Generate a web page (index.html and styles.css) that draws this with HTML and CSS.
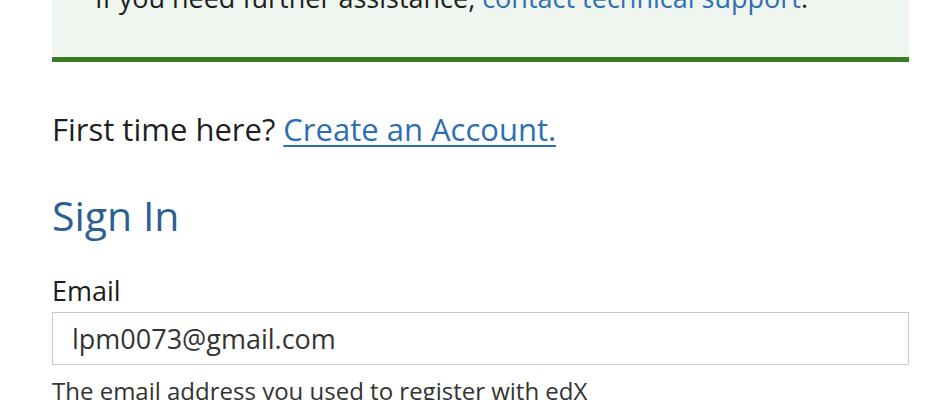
FILE: index.html
```html
<!DOCTYPE html>
<html lang="en">
<head>
<meta charset="utf-8">
<title>Sign In</title>
<link rel="stylesheet" href="styles.css">
</head>
<body>
<main class="page">
  <div class="alert">
    <p class="alert-text">If you need further assistance, <a href="#" class="alert-link">contact technical support</a>.</p>
  </div>
  <p class="first-time">First time here? <a href="#" class="create-link">Create an Account.</a></p>
  <h2 class="title">Sign In</h2>
  <form class="form">
    <label class="label" for="email">Email</label>
    <input class="input" id="email" type="email" value="lpm0073@gmail.com">
    <p class="help">The email address you used to register with edX</p>
  </form>
</main>
</body>
</html>
```
FILE: styles.css
```css
html, body {
  margin: 0;
  padding: 0;
  background: #ffffff;
}
body {
  font-family: "Open Sans", "DejaVu Sans", sans-serif;
  color: #1f1f1f;
  overflow: hidden;
}
.page {
  width: 857px;
  margin-left: 52px;
}
.alert {
  margin-top: -42px;
  background: #eef6ef;
  border-bottom: 5px solid #3b7a25;
  padding: 16px 40px 36px 43px;
}
.alert-text {
  margin: 0;
  font-size: 27px;
  line-height: 47px;
  color: #1e1e1e;
}
.alert-link {
  color: #2f6fb4;
  text-decoration: none;
}
.first-time {
  margin: 47px 0 0 0;
  font-size: 31px;
  line-height: 40px;
  color: #1f1f1f;
}
.create-link {
  color: #2d6fb5;
  text-decoration: underline;
  text-decoration-thickness: 2px;
  text-underline-offset: 4px;
}
.title {
  margin: 38px 0 0 0;
  font-size: 41px;
  font-weight: 400;
  line-height: 56px;
  color: #2b5f95;
}
.form {
  margin-top: 31px;
  display: flex;
  flex-direction: column;
}
.label {
  font-size: 27px;
  line-height: 34px;
  color: #1a1a1a;
}
.input {
  margin-top: 4px;
  height: 53px;
  box-sizing: border-box;
  border: 1px solid #c8c8c8;
  padding: 0 19px;
  font-family: "Open Sans", "DejaVu Sans", sans-serif;
  font-size: 27px;
  color: #333333;
  outline: none;
}
.help {
  margin: 11px 0 0 0;
  font-size: 24px;
  line-height: 30px;
  color: #333333;
}
```
